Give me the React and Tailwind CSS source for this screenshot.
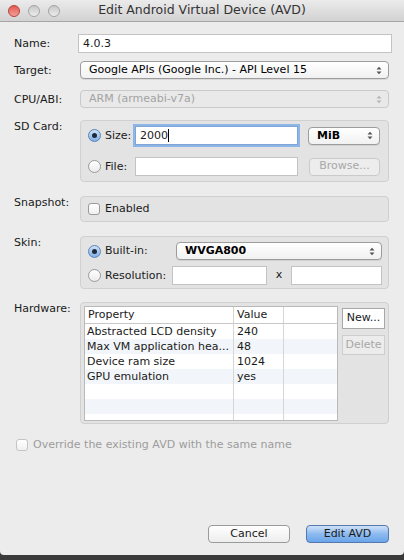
import React from "react";

const font = { fontFamily: '"DejaVu Sans", "Liberation Sans", sans-serif' };

const Radio = ({ checked }) => (
  <span
    className={
      "inline-flex items-center justify-center w-[13px] h-[13px] rounded-full border shrink-0 " +
      (checked
        ? "border-[#5b84b8] bg-gradient-to-b from-[#cfe0f5] to-[#7fb0e8]"
        : "border-[#9a9a9a] bg-gradient-to-b from-white to-[#ececec]")
    }
  >
    {checked && <span className="w-[5px] h-[5px] rounded-full bg-[#1d2a3a]" />}
  </span>
);

const Check = ({ disabled }) => (
  <span
    className={
      "inline-block w-[12px] h-[12px] rounded-[3px] border shrink-0 bg-gradient-to-b from-white to-[#f0f0f0] " +
      (disabled ? "border-[#c4c4c4]" : "border-[#9a9a9a]")
    }
  />
);

const Arrows = ({ disabled }) => (
  <svg width="6" height="9" viewBox="0 0 6 9" className="shrink-0">
    <path d="M0.5 3.5 L3 0.8 L5.5 3.5 Z M0.5 5.5 L3 8.2 L5.5 5.5 Z" fill={disabled ? "#b5b5b5" : "#555"} />
  </svg>
);

const Select = ({ children, className, disabled }) => (
  <div
    className={
      "flex items-center justify-between h-[18px] rounded-[4px] border pl-[8px] pr-[6px] text-[11px] leading-[16px] " +
      (disabled
        ? "border-[#c9c9c9] bg-[#e9e9e9] text-[#a3a3a3]"
        : "border-[#9c9c9c] bg-gradient-to-b from-white to-[#f1f1f1] text-black shadow-[0_1px_0_rgba(0,0,0,0.08)]") +
      " " +
      className
    }
  >
    <span className="truncate">{children}</span>
    <Arrows disabled={disabled} />
  </div>
);

const Group = ({ children, className }) => (
  <div className={"flex-1 rounded-[4px] border border-[#d0d0d0] bg-[#e3e3e3] " + className}>{children}</div>
);

// label + control; label line height kept under control height so rows don't grow
const Row = ({ label, children, className, labelTop }) => (
  <div className={"flex items-start " + className}>
    <div className={"w-[66px] shrink-0 text-[11px] leading-[14px] " + labelTop}>{label}</div>
    {children}
  </div>
);

const Field = ({ className, children, focus }) => (
  <div
    className={
      "h-[19px] bg-white border text-[11px] leading-[16px] flex items-center px-[4px] " +
      (focus ? "border-[#7ea6d6] ring-[2px] ring-[#8db6e6]" : "border-[#c3c3c3]") +
      " " +
      className
    }
  >
    {children}
  </div>
);

const rows = [
  ["Abstracted LCD density", "240"],
  ["Max VM application hea...", "48"],
  ["Device ram size", "1024"],
  ["GPU emulation", "yes"],
  ["", ""],
  ["", ""],
  ["", ""],
];

export default function App() {
  return (
    <div className="w-[404px] h-[560px] bg-[#3a3a3a] overflow-hidden" style={font}>
      <div className="h-[555px] bg-[#ececec] rounded-b-[4px] flex flex-col text-[#1a1a1a]">
        {/* title bar */}
        <div className="relative h-[22px] shrink-0 bg-gradient-to-b from-[#ebebeb] to-[#d2d2d2] border-b border-[#a6a6a6] flex items-center justify-center">
          <div className="absolute left-[8px] top-[5px] flex gap-[8px]">
            <span className="w-[12px] h-[12px] rounded-full bg-gradient-to-b from-[#e4574e] to-[#f09f98] border border-[#b5413a]" />
            <span className="w-[12px] h-[12px] rounded-full bg-gradient-to-b from-[#c8c8c8] to-[#ececec] border border-[#a4a4a4]" />
            <span className="w-[12px] h-[12px] rounded-full bg-gradient-to-b from-[#c8c8c8] to-[#ececec] border border-[#a4a4a4]" />
          </div>
          <span className="text-[12.5px] text-[#333]">Edit Android Virtual Device (AVD)</span>
        </div>

        <div className="pl-[14px] pr-[12px] flex flex-col">
          <Row label="Name:" className="mt-[12px] h-[18px]" labelTop="pt-[3px]">
            <Field className="flex-1 -ml-[2px] h-[18px]">4.0.3</Field>
          </Row>

          <Row label="Target:" className="mt-[9px] h-[18px] pr-[3px]" labelTop="pt-[3px]">
            <Select className="flex-1">Google APIs (Google Inc.) - API Level 15</Select>
          </Row>

          <Row label="CPU/ABI:" className="mt-[11px] h-[18px] pr-[3px]" labelTop="pt-[3px]">
            <Select disabled className="flex-1">ARM (armeabi-v7a)</Select>
          </Row>

          <Row label="SD Card:" className="mt-[12px] pr-[3px]" labelTop="pt-[0px]">
            <Group className="h-[62px] pl-[7px] pr-[8px] pt-[5px] flex flex-col gap-[12px]">
              <div className="flex items-center h-[19px]">
                <Radio checked />
                <span className="ml-[4px] w-[30px] text-[11px] leading-[14px]">Size:</span>
                <Field focus className="w-[163px]">
                  2000<span className="w-px h-[13px] bg-black" />
                </Field>
                <Select className="ml-[10px] flex-1 font-bold">MiB</Select>
              </div>
              <div className="flex items-center h-[19px]">
                <Radio />
                <span className="ml-[4px] w-[30px] text-[11px] leading-[14px]">File:</span>
                <Field className="w-[163px]" />
                <div className="ml-[11px] flex-1 h-[18px] rounded-[4px] border border-[#cacaca] bg-[#ededed] text-[11px] text-[#a8a8a8] flex items-center justify-center">
                  Browse...
                </div>
              </div>
            </Group>
          </Row>

          <Row label="Snapshot:" className="mt-[14px] pr-[3px]" labelTop="pt-[0px]">
            <Group className="h-[26px] pl-[7px] flex items-center">
              <Check />
              <span className="ml-[5px] text-[11px] leading-[14px]">Enabled</span>
            </Group>
          </Row>

          <Row label="Skin:" className="mt-[14px] pr-[3px]" labelTop="pt-[0px]">
            <Group className="h-[53px] pl-[7px] pr-[6px] pt-[5px] flex flex-col gap-[6px]">
              <div className="flex items-center h-[18px]">
                <Radio checked />
                <span className="ml-[4px] w-[71px] text-[11px] leading-[14px]">Built-in:</span>
                <Select className="flex-1 font-bold">WVGA800</Select>
              </div>
              <div className="flex items-center h-[19px]">
                <Radio />
                <span className="ml-[4px] w-[67px] text-[11px] leading-[14px] whitespace-nowrap">Resolution:</span>
                <Field className="w-[95px]" />
                <span className="w-[24px] text-center text-[11px]">x</span>
                <Field className="flex-1" />
              </div>
            </Group>
          </Row>

          <Row label="Hardware:" className="mt-[13px] pr-[3px]" labelTop="pt-[0px]">
            <Group className="h-[122px] pl-[3px] pr-[3px] pt-[3px] flex gap-[4px]">
              <div className="w-[254px] h-[115px] bg-white border border-[#b9b9b9] overflow-hidden text-[11px]">
                <div className="flex h-[17px] leading-[16px] border-b border-[#c8c8c8] bg-white">
                  <div className="w-[149px] pl-[3px] border-r border-[#d6d6d6]">Property</div>
                  <div className="w-[50px] pl-[3px] border-r border-[#d6d6d6]">Value</div>
                  <div className="flex-1" />
                </div>
                {rows.map(([p, v], i) => (
                  <div key={i} className={"flex h-[15px] leading-[15px] " + (i % 2 ? "bg-[#f2f5f9]" : "bg-white")}>
                    <div className="w-[149px] pl-[2px] border-r border-[#d6d6d6] whitespace-nowrap overflow-hidden">{p}</div>
                    <div className="w-[50px] pl-[3px] border-r border-[#d6d6d6]">{v}</div>
                    <div className="flex-1" />
                  </div>
                ))}
              </div>
              <div className="flex-1 flex flex-col gap-[6px] pt-[2px]">
                <div className="h-[21px] border border-[#a8a8a8] bg-white text-[11px] flex items-center justify-center">New...</div>
                <div className="h-[20px] border border-[#cdcdcd] bg-[#ececec] text-[11px] text-[#a8a8a8] flex items-center justify-center">Delete</div>
              </div>
            </Group>
          </Row>

          <div className="mt-[13px] flex items-center pl-[2px] h-[16px]">
            <Check disabled />
            <span className="ml-[5px] text-[11px] leading-[14px] text-[#9c9c9c]">Override the existing AVD with the same name</span>
          </div>
        </div>

        <div className="mt-auto mb-[12px] flex justify-end gap-[16px] pr-[15px]">
          <div className="w-[82px] h-[18px] rounded-[4px] border border-[#9a9a9a] bg-gradient-to-b from-white to-[#ededed] text-[11px] flex items-center justify-center">
            Cancel
          </div>
          <div className="w-[83px] h-[18px] rounded-[4px] border border-[#5479ae] bg-gradient-to-b from-[#cfe2f8] via-[#8dbaef] to-[#6aa5ea] text-[11px] flex items-center justify-center">
            Edit AVD
          </div>
        </div>
      </div>
    </div>
  );
}
